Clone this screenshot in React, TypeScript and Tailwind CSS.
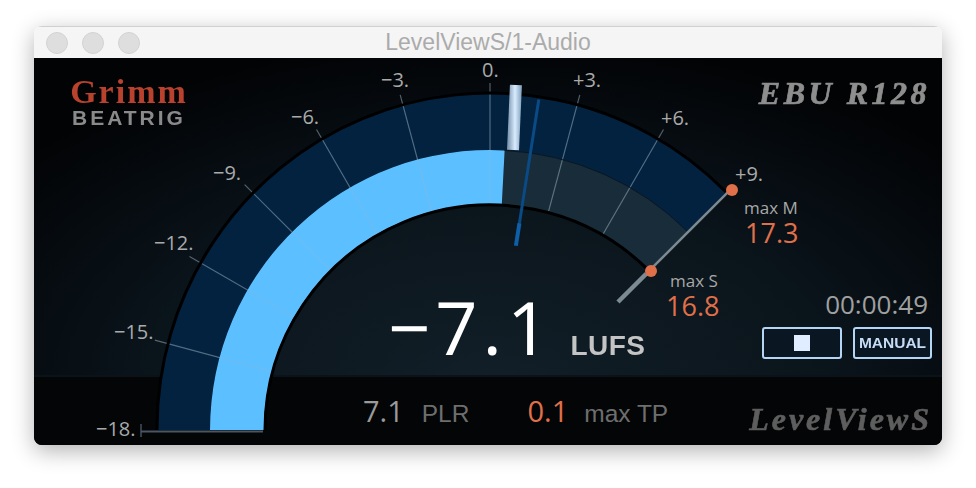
const CX = 490
const CY = 430

// page coordinates; 0deg points right, 90deg points up
const pt = (r: number, deg: number) => {
  const a = (deg * Math.PI) / 180
  return [CX + r * Math.cos(a), CY - r * Math.sin(a)]
}

const band = (r1: number, r2: number, from: number, to: number) => {
  const [ax, ay] = pt(r2, from)
  const [bx, by] = pt(r2, to)
  const [cx, cy] = pt(r1, to)
  const [dx, dy] = pt(r1, from)
  return `M${ax} ${ay}A${r2} ${r2} 0 0 1 ${bx} ${by}L${cx} ${cy}A${r1} ${r1} 0 0 0 ${dx} ${dy}Z`
}

const arc = (r: number, from: number, to: number) => {
  const [ax, ay] = pt(r, from)
  const [bx, by] = pt(r, to)
  return `M${ax} ${ay}A${r} ${r} 0 0 1 ${bx} ${by}`
}

// the outer rim is a touch flatter than a true circle
const RIM = 'M157 430A333 336 0 0 1 726 192'

const TICKS = [165, 150, 135, 120, 105, 90, 75, 60]

const SCALE = [
  { label: '−18.', x: 96, y: 436 },
  { label: '−15.', x: 114, y: 339 },
  { label: '−12.', x: 154, y: 250 },
  { label: '−9.', x: 213, y: 180 },
  { label: '−6.', x: 291, y: 124 },
  { label: '−3.', x: 381, y: 87 },
  { label: '0.', x: 482, y: 77 },
  { label: '+3.', x: 573, y: 87 },
  { label: '+6.', x: 661, y: 125 },
  { label: '+9.', x: 735, y: 181 },
]

function Gauge() {
  const [lx1, ly1] = pt(345, 45)
  const [lx2, ly2] = pt(221, 45)
  const [lx3, ly3] = pt(181, 45)
  const [mx1, my1] = pt(334, 81.6)
  const [mx2, my2] = pt(186, 82)
  const [mx3, my3] = pt(209, 81.9)
  const [px1, py1] = pt(346, 85.7)
  const [px2, py2] = pt(281, 85.3)
  const [ix, iy] = pt(280, 45)

  return (
    <svg viewBox="34 58 908 387" className="absolute inset-0 h-full w-full font-['Open_Sans',sans-serif]">
      <defs>
        <linearGradient id="peak" gradientUnits="userSpaceOnUse" x1="508" y1="0" x2="522" y2="0">
          <stop offset="0" stopColor="#7f99b2" />
          <stop offset="0.5" stopColor="#d9ecff" />
          <stop offset="1" stopColor="#7d9cb8" />
        </linearGradient>
      </defs>

      <path d={`${RIM}L${ix} ${iy}A280 280 0 0 0 210 430Z`} fill="#02223f" />
      <path d={band(226, 280, 87, 45)} fill="#182c39" />

      {TICKS.map((deg) => {
        const [x1, y1] = pt(347, deg)
        const [x2, y2] = pt(226, deg)
        return <line key={deg} x1={x1} y1={y1} x2={x2} y2={y2} stroke="#b4c8d7" strokeOpacity="0.45" strokeWidth="1.2" />
      })}

      <path d={band(226, 280, 180, 87)} fill="#5cbfff" />
      {TICKS.slice(0, 6).map((deg) => {
        const [x1, y1] = pt(280, deg)
        const [x2, y2] = pt(226, deg)
        return <line key={deg} x1={x1} y1={y1} x2={x2} y2={y2} stroke="#9fb4c4" strokeOpacity="0.35" strokeWidth="1" />
      })}

      <path d={RIM} fill="none" stroke="#000" strokeWidth="3" />
      <path d={arc(225, 180, 45)} fill="none" stroke="#000" strokeWidth="3" />
      <path d={arc(280, 87, 45)} fill="none" stroke="#0a1826" strokeWidth="1" />

      <line x1={px1} y1={py1} x2={px2} y2={py2} stroke="url(#peak)" strokeWidth="12" />
      <line x1={mx1} y1={my1} x2={mx3} y2={my3} stroke="#0a4a85" strokeWidth="3" />
      <line x1={mx3} y1={my3} x2={mx2} y2={my2} stroke="#0e5ea8" strokeWidth="4" />

      <line x1={lx1} y1={ly1} x2={lx2} y2={ly2} stroke="#7d8a92" strokeWidth="2.5" />
      <line x1={lx2} y1={ly2} x2={lx3} y2={ly3} stroke="#7d8a92" strokeWidth="4.5" />
      <circle cx="732" cy="190" r="6" fill="#e0704a" />
      <circle cx="651" cy="271" r="6" fill="#e0704a" />

      <line x1="141" y1="424" x2="141" y2="437" stroke="#6a7480" strokeWidth="1" />
      <line x1="141" y1="431.5" x2="263" y2="431.5" stroke="#4a5664" strokeWidth="2" />

      {SCALE.map((s) => (
        <text key={s.label} x={s.x} y={s.y} fontSize="20" fill="#aaaaaa">
          {s.label}
        </text>
      ))}

      <text x="744" y="214" fontSize="17" fill="#a8a8a8">max M</text>
      <text x="745" y="243" fontSize="27" fill="#e0704a">17.3</text>
      <text x="670" y="287" fontSize="17" fill="#a8a8a8">max S</text>
      <text x="666" y="316" fontSize="27" fill="#e0704a">16.8</text>
    </svg>
  )
}

export default function App() {
  return (
    <div className="h-[488px] w-[976px] bg-white pl-[34px] pt-[26px]">
      <div className="w-[908px] overflow-hidden rounded-lg shadow-[0_6px_22px_rgba(0,0,0,0.3)]">
        {/* title bar */}
        <div className="relative flex h-8 items-center justify-center border-t border-[#d0d0d0] bg-[#f5f5f5]">
          <div className="absolute left-3 flex gap-[14px]">
            <span className="h-[22px] w-[22px] rounded-full border border-[#d2d2d2] bg-[#dedede]" />
            <span className="h-[22px] w-[22px] rounded-full border border-[#d2d2d2] bg-[#dedede]" />
            <span className="h-[22px] w-[22px] rounded-full border border-[#d2d2d2] bg-[#dedede]" />
          </div>
          <span className="font-['Liberation_Sans',sans-serif] text-[23px] text-[#ababab]">LevelViewS/1-Audio</span>
        </div>

        <div className="relative h-[387px] bg-[#020406]">
          <div className="flex h-[317px] flex-col justify-between bg-[radial-gradient(ellipse_620px_340px_at_456px_320px,#121f28_0%,#0a141b_55%,#020305_100%)]">
            <div className="relative z-10 flex items-start justify-between pl-[35px] pr-[12px] pt-[17px]">
              <div className="flex w-[120px] flex-col items-center">
                <span className="font-['Liberation_Serif',serif] text-[34px] font-bold leading-[34px] tracking-[2px] text-[#b8422e] blur-[0.4px]">
                  Grimm
                </span>
                <span className="font-['Liberation_Sans',sans-serif] text-[21px] font-bold leading-[18px] tracking-[3px] text-[#8a8a8a] blur-[0.3px]">
                  BEATRIG
                </span>
              </div>
              <span className="font-['Liberation_Serif',serif] text-[32px] font-bold italic leading-[36px] tracking-[3.5px] text-[#8e8e8e] blur-[0.5px] [-webkit-text-stroke:0.7px_#8e8e8e]">
                EBU R128
              </span>
            </div>

            <div className="relative z-10 flex items-end justify-between pb-4 pl-[354px] pr-[10px]">
              <div className="-mb-[5px] flex items-baseline gap-[16px] text-white">
                <span className="font-['Open_Sans',sans-serif] text-[74px] leading-[74px] tracking-[5px]">−7.1</span>
                <span className="font-['Liberation_Sans',sans-serif] text-[28px] font-bold leading-none tracking-[0.5px] text-[#c4c4c4] blur-[0.4px]">
                  LUFS
                </span>
              </div>
              <div className="flex flex-col items-end gap-[9px]">
                <span className="pr-1 font-['Open_Sans',sans-serif] text-[26px] leading-[28px] text-[#a0a0a0]">00:00:49</span>
                <div className="flex gap-[11px]">
                  <button className="flex h-8 w-[80px] items-center justify-center rounded-[3px] border-2 border-[#b5d5f5] bg-[#0a1622]">
                    <span className="h-4 w-4 bg-[#e0ecff]" />
                  </button>
                  <button className="flex h-8 w-[79px] items-center justify-center rounded-[3px] border-2 border-[#b5d5f5] bg-[#0a1622] font-['Liberation_Sans',sans-serif] text-[15.5px] font-bold text-[#c5dcf5] blur-[0.3px]">
                    MANUAL
                  </button>
                </div>
              </div>
            </div>
          </div>

          <div className="flex h-[70px] items-center justify-between border-t-2 border-[#0b1218] bg-[#030506] pl-[329px] pr-[10px]">
            <div className="relative z-10 flex items-baseline font-['Open_Sans',sans-serif]">
              <span className="text-[29px] text-[#9a9a9a]">7.1</span>
              <span className="ml-[18px] font-['Liberation_Sans',sans-serif] text-[24.5px] text-[#6e6e6e]">PLR</span>
              <span className="ml-[58px] text-[29px] text-[#e0704a]">0.1</span>
              <span className="ml-[16px] font-['Liberation_Sans',sans-serif] text-[24.5px] text-[#6e6e6e]">max TP</span>
            </div>
            <span className="relative z-10 mt-4 font-['Liberation_Serif',serif] text-[32px] font-bold italic tracking-[3px] text-[#5e5e5e] blur-[0.5px] [-webkit-text-stroke:0.6px_#5e5e5e]">
              LevelViewS
            </span>
          </div>

          <Gauge />
        </div>
      </div>
    </div>
  )
}
